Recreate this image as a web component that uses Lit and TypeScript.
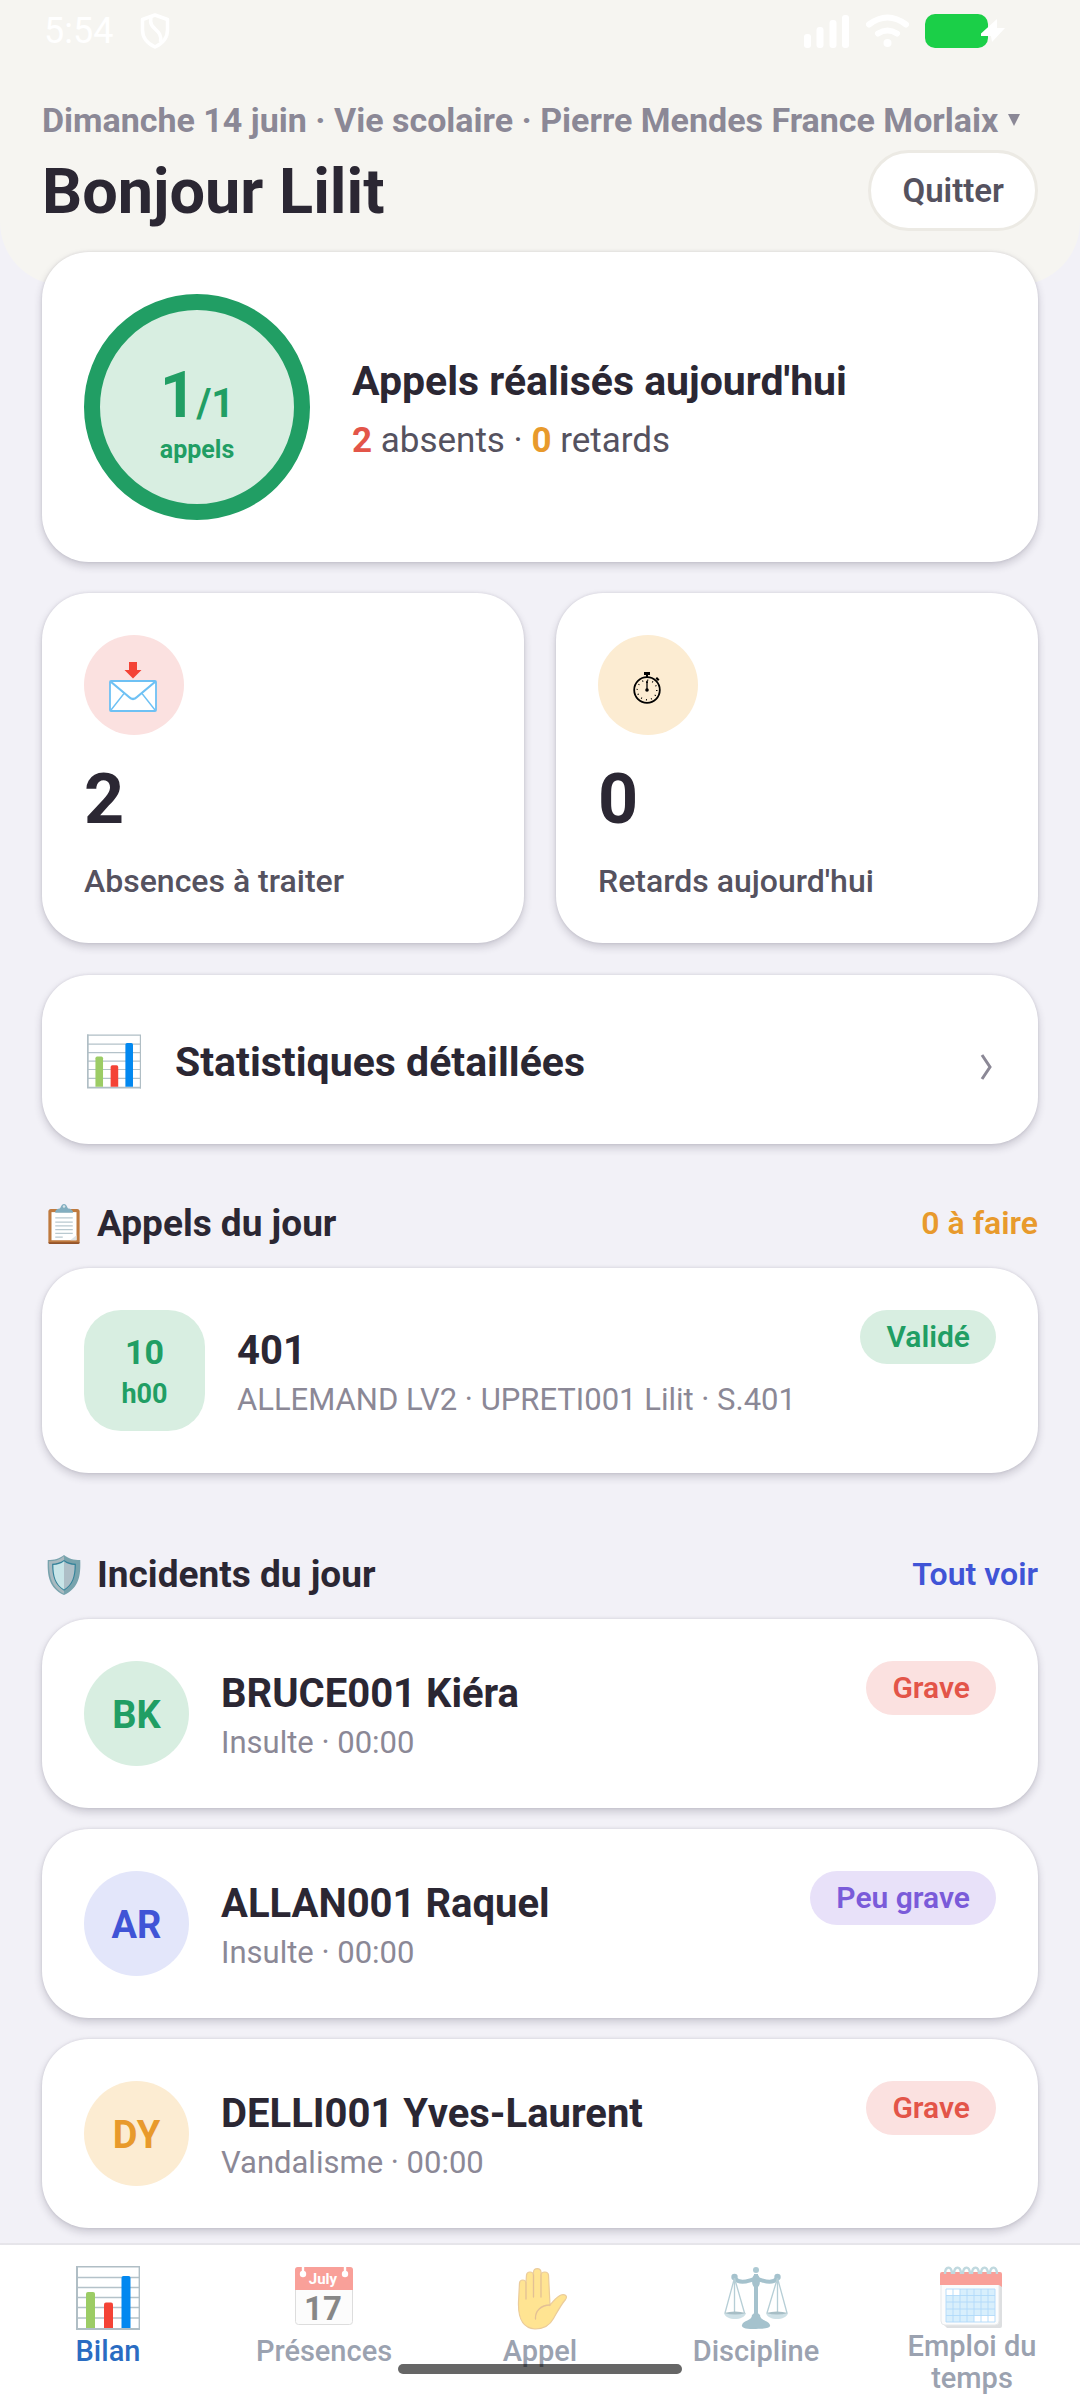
import { LitElement, html, svg, css, nothing } from 'lit';
import { customElement, property, state } from 'lit/decorators.js';
import { classMap } from 'lit/directives/class-map.js';

type Tone = 'green' | 'red' | 'orange' | 'blue' | 'violet';

interface Incident {
    initials: string;
    name: string;
    detail: string;
    level: string;
    avatarTone: Tone;
    levelTone: Tone;
}

const INCIDENTS: Incident[] = [
    { initials: 'BK', name: 'BRUCE001 Kiéra', detail: 'Insulte · 00:00', level: 'Grave', avatarTone: 'green', levelTone: 'red' },
    { initials: 'AR', name: 'ALLAN001 Raquel', detail: 'Insulte · 00:00', level: 'Peu grave', avatarTone: 'blue', levelTone: 'violet' },
    { initials: 'DY', name: 'DELLI001 Yves-Laurent', detail: 'Vandalisme · 00:00', level: 'Grave', avatarTone: 'orange', levelTone: 'red' },
];

const TABS = [
    { id: 'bilan', label: 'Bilan', icon: 'chart' },
    { id: 'presences', label: 'Présences', icon: 'calendar' },
    { id: 'appel', label: 'Appel', icon: 'hand' },
    { id: 'discipline', label: 'Discipline', icon: 'scales' },
    { id: 'emploi', label: 'Emploi du temps', icon: 'planner' },
];

// Every pictogram is drawn on a 64x64 grid
const ICONS = {
    chart: svg`
        <rect x="1" y="1" width="62" height="62" fill="#fff"/>
        <path d="M1 11.500H63M1 21.500H63M1 31.500H63M1 41.500H63M1 52H63" stroke="#b4c2c9" stroke-width="1.400"/>
        <path d="M0 .7H64M63.300 0V64" stroke="#b0bec5" stroke-width="1.400"/>
        <path d="M1 0V64M0 63H64" stroke="#b0bec5" stroke-width="2"/>
        <path d="M10 62V28q0-2 2-2h5q2 0 2 2v34z" fill="#9ccc65"/>
        <path d="M28 62V38.500q0-2 2-2h5q2 0 2 2V62z" fill="#f44336"/>
        <path d="M45.500 62V12q0-2 2-2h5q2 0 2 2v50z" fill="#0288f0"/>
    `,
    calendar: svg`
        <rect x="3.500" y="1.500" width="57" height="57" rx="3" fill="#fafafa" stroke="#bdbdbd"/>
        <path d="M3 24V4q0-3 3-3h52q3 0 3 3v20z" fill="#f44336"/>
        <path d="M11 0v7M53 0v7" stroke="#fff" stroke-width="2.400"/>
        <circle cx="11" cy="8" r="3.200" fill="#fff"/>
        <circle cx="53" cy="8" r="3.200" fill="#fff"/>
        <text x="31" y="18" text-anchor="middle" font-size="15" font-weight="700" fill="#fff">July</text>
        <text x="31" y="54" text-anchor="middle" font-size="33" font-weight="700" fill="#111">17</text>
    `,
    hand: svg`
        <path d="M27 63C14 62 10 52 10.500 36L11.500 17c.5-4 6-4 6.500 0L18.500 9c.5-4 6.500-4 7 0V6c.5-4.500 7-4.500 7.500 0v3c.5-4 7-4 7.500 0L42 39c4-4 6-8 11-10 4-1 7 1 4.500 4.500-5 6-8 12-12 19C42 59 36 63 27 63z" fill="#ffca28" stroke="#d99a38" stroke-width="1.200"/>
        <path d="M18 17v16M25.500 9v22M33 9v22M42 39c-9 0-15 6-14.500 14" fill="none" stroke="#c9832e" stroke-width="1.300" stroke-linecap="round"/>
    `,
    scales: svg`
        <path d="M10 12c8 8 16 1 22 1s14 7 22-1" fill="none" stroke="#4d879d" stroke-width="4"/>
        <path d="M32 8v42" stroke="#4d879d" stroke-width="4"/>
        <ellipse cx="32" cy="15" rx="4" ry="7" fill="#4d879d"/>
        <circle cx="32" cy="4" r="3" fill="#5c95a8"/>
        <circle cx="10.500" cy="11" r="3.200" fill="#4d879d"/>
        <circle cx="53.500" cy="11" r="3.200" fill="#4d879d"/>
        <path d="M10.500 12L1 47M10.500 12l10 35M10.500 12v35M53.500 12L43 47M53.500 12L63 47M53.500 12v35" stroke="#6f9fae" stroke-width="1.300"/>
        <path d="M0 47h22c-2 8-20 8-22 0zM42 47h22c-2 8-20 8-22 0z" fill="#9ec3cf"/>
        <path d="M0 47q11-3 22 0-11 3-22 0zM42 47q11-3 22 0-11 3-22 0z" fill="#517f8e"/>
        <path d="M28 49q4-5 8 0c0 6 9 5 10 10 1 3-5 4-14 4s-15-1-14-4c1-5 10-4 10-10z" fill="#4d879d"/>
    `,
    planner: svg`
        <path d="M2 14h59q1 0 1 2v44q0 2-2 2H7l-5-5z" fill="#bdc1c4"/>
        <path d="M1 8h58v47q0 4-4 4H5q-4 0-4-4z" fill="#fafafa" stroke="#cfd3d6"/>
        <path d="M0 19V8q0-2 2-2h58q2 0 2 2v13l-3-2H0z" fill="#f44336"/>
        <path d="M6 23h49v33H6z" fill="#b3e0fb"/>
        <path d="M6 23h14v7H6zM34 49h21v7H34z" fill="#fff"/>
        <path d="M6 23h49M6 29.500h49M6 36h49M6 43h49M6 49.500h49M6 56h49M6 23v33M13 23v33M20 23v33M27 23v33M34 23v33M41 23v33M48 23v33M55 23v33" stroke="#64b5f6" stroke-width=".9"/>
        <path d="M5 8c0-8 7-9 7 0M14 8c0-8 7-9 7 0M23 8c0-8 7-9 7 0M32 8c0-8 7-9 7 0M41 8c0-8 7-9 7 0M50 8c0-8 7-9 7 0" fill="none" stroke="#82b4c0" stroke-width="2.400"/>
    `,
    mail: svg`
        <path d="M27 9h8v8h4.500L31 25.500 22.500 17H27z" fill="#f44336"/>
        <rect x="8" y="28" width="46" height="30" rx="1" fill="#fff" stroke="#6ec1f4" stroke-width="1.800"/>
        <path d="M8.500 28.500L27 44q4 4 8 0l18.500-15.500" fill="none" stroke="#6ec1f4" stroke-width="2.200"/>
        <path d="M9 57l13-16.500M53 57L40 40.500" stroke="#6ec1f4" stroke-width="1.400"/>
    `,
    stopwatch: svg`
        <circle cx="31" cy="37" r="12.800" fill="none" stroke="#000" stroke-width="1.800"/>
        <path d="M28 19h6v3h-6zM30 21h2v3h-2zM41 24l2.500 2.500-1.500 1.500-2.500-2.500z"/>
        <path d="M31 28v9" stroke="#000" stroke-width="1.300"/>
        <path d="M30 30l1-3 1 3z"/>
        <circle cx="31" cy="37" r="1.800"/>
        <circle cx="31" cy="37" r="9.800" fill="none" stroke="#000" stroke-width="1.400" stroke-dasharray="1 4.130"/>
    `,
    clipboard: svg`
        <rect x="7" y="8" width="50" height="56" rx="4" fill="#bf7a3f"/>
        <path d="M7 61h50v1q0 2-3 2H10q-3 0-3-2z" fill="#93532a"/>
        <rect x="12" y="13" width="40" height="45" fill="#fff"/>
        <path d="M52 50v8H42z" fill="#dfe4e6"/>
        <path d="M18 22h28M18 29h28M18 35h28M18 41h28M18 47h28M18 53h12" stroke="#b9c9d0" stroke-width="2"/>
        <path d="M18 14q-1-6 7-7c2 0 2-7 7-7s5 7 7 7c8 1 8 7 7 7z" fill="#82aec0"/>
        <circle cx="32" cy="4" r="2" fill="#d7e5ea"/>
    `,
    shield: svg`
        <path d="M32 0C25 6 16 8 6 8c-1 25 2 45 26 56C56 53 59 33 58 8 48 8 39 6 32 0z" fill="#78a3ad"/>
        <path d="M32 2C25 8 17 10 8 10c0 23 3 41 24 52z" fill="#a9bac0"/>
        <path d="M32 8c-6 4-13 6-19 6 0 20 4 34 19 43 15-9 19-23 19-43-6 0-13-2-19-6z" fill="#35839a"/>
        <path d="M32 10c-5 4-11 6-17 6 0 19 4 31 17 39z" fill="#c8e5e8"/>
        <path d="M32 10c5 4 11 6 17 6 0 19-4 31-17 39z" fill="#aebfc7"/>
    `,
};

const icon = (name: string) => html`<svg class="icon icon-${name}" viewBox="0 0 64 64" aria-hidden="true">${ICONS[name]}</svg>`;

const shared = css`
    * {
        box-sizing: border-box;
    }

    .card {
        background: #fff;
        border-radius: 47px;
        padding: 42px;
        box-shadow: 0 4px 8px rgba(40, 35, 60, 0.2), 0 0 3px rgba(40, 35, 60, 0.12);
    }

    .row-card {
        display: flex;
        align-items: center;
    }

    .info {
        flex: 1;
        min-width: 0;
        padding-top: 3px;
        display: flex;
        flex-direction: column;
        gap: 6px;
    }

    .name {
        font-size: 40px;
        line-height: 50px;
        font-weight: 700;
        color: #2b2733;
    }

    .detail {
        font-size: 31px;
        line-height: 36px;
        color: #8b8896;
    }

    .badge {
        align-self: flex-start;
        padding: 10px 26px;
        border-radius: 27px;
        font-size: 30px;
        line-height: 34px;
        font-weight: 600;
    }

    .green { color: #219e64; background: #d8eee1; }
    .red { color: #e35549; background: #fbe1e0; }
    .orange { color: #e89a2c; background: #fcecd2; }
    .blue { color: #4054d6; background: #e3e6fa; }
    .violet { color: #7a5bd9; background: #e8e1f9; }
`;

@customElement('incident-card')
export class IncidentCard extends LitElement {
    @property({ attribute: false }) incident!: Incident;

    static styles = [shared, css`
        :host {
            display: block;
        }

        .row-card {
            gap: 32px;
        }

        .avatar {
            width: 105px;
            height: 105px;
            border-radius: 50%;
            padding-top: 2px;
            display: flex;
            align-items: center;
            justify-content: center;
            font-size: 38px;
            font-weight: 700;
        }
    `];

    render() {
        const { initials, name, detail, level, avatarTone, levelTone } = this.incident;
        return html`
            <article class="card row-card">
                <div class="avatar ${avatarTone}">${initials}</div>
                <div class="info">
                    <div class="name">${name}</div>
                    <div class="detail">${detail}</div>
                </div>
                <div class="badge ${levelTone}">${level}</div>
            </article>
        `;
    }
}

@customElement('app-root')
export class AppRoot extends LitElement {
    @state() private tab = 'bilan';

    static styles = [shared, css`
        :host {
            display: flex;
            flex-direction: column;
            min-height: 100vh;
            background: #f2f1f7;
            color: #2b2733;
            font-family: Roboto, 'Noto Sans', sans-serif;
        }

        button {
            font: inherit;
            color: inherit;
            background: none;
            border: none;
            padding: 0;
            cursor: pointer;
        }

        h1, h2, p {
            margin: 0;
        }

        .icon {
            display: block;
            flex: none;
            width: 64px;
            height: 64px;
        }

        .top {
            background: #f6f5f1;
            border-radius: 0 0 63px 63px;
            padding: 0 42px 54px;
        }

        .status {
            display: flex;
            align-items: center;
            height: 101px;
            padding: 0 33px 39px 2px;
            color: #fff;
            font-size: 36px;
        }

        .status-left {
            flex: 1;
            display: flex;
            align-items: center;
            gap: 27px;
        }

        .status-right {
            display: flex;
            align-items: center;
            gap: 16px;
        }

        .status svg {
            display: block;
        }

        .school {
            display: flex;
            align-items: center;
            gap: 10px;
            width: 100%;
            font-size: 34px;
            line-height: 38px;
            font-weight: 700;
            color: #8b8896;
            white-space: nowrap;
        }

        .welcome {
            display: flex;
            align-items: center;
            justify-content: space-between;
            margin-top: 11px;
        }

        .welcome h1 {
            padding-top: 2px;
            font-size: 63px;
            line-height: 72px;
            font-weight: 700;
        }

        .welcome .quit {
            height: 81px;
            padding: 0 31px;
            background: #fff;
            border: 3px solid #eceae4;
            border-radius: 41px;
            font-size: 33px;
            font-weight: 600;
            color: #55525f;
        }

        main {
            flex: 1;
            position: relative;
            margin-top: -33px;
            padding: 0 42px;
            display: flex;
            flex-direction: column;
        }

        .summary {
            display: flex;
            align-items: center;
            gap: 42px;
        }

        .ring {
            width: 226px;
            height: 226px;
            flex: none;
            border: 16px solid #219e64;
            border-radius: 50%;
            padding-top: 13px;
            display: flex;
            flex-direction: column;
            align-items: center;
            justify-content: center;
            font-weight: 700;
        }

        .ring-count {
            font-size: 64px;
            line-height: 64px;
        }

        .ring-total {
            font-size: 40px;
        }

        .ring-label {
            font-size: 25px;
            line-height: 28px;
        }

        .summary-text {
            padding-top: 4px;
            display: flex;
            flex-direction: column;
            gap: 16px;
        }

        .summary-text h2 {
            font-size: 41px;
            line-height: 48px;
        }

        .summary-text p {
            font-size: 35px;
            line-height: 40px;
            color: #55525f;
        }

        .summary-text b {
            background: none;
        }

        .tiles {
            display: grid;
            grid-template-columns: 1fr 1fr;
            gap: 32px;
            margin: 31px 0 32px;
        }

        .tile-icon {
            width: 100px;
            height: 100px;
            border-radius: 50%;
            display: flex;
            align-items: center;
            justify-content: center;
        }

        .tile-value {
            margin-top: 23px;
            font-size: 70px;
            line-height: 82px;
            font-weight: 700;
        }

        .tile-label {
            margin-top: 21px;
            font-size: 32px;
            line-height: 40px;
            font-weight: 500;
            color: #55525f;
        }

        .card.stats-link {
            display: flex;
            align-items: center;
            gap: 31px;
            width: 100%;
            padding: 54px 42px 50px;
            text-align: left;
            font-size: 41px;
            font-weight: 700;
            background: #fff;
        }

        .stats-link .icon {
            width: 60px;
            height: 65px;
            padding: 0 3px;
        }

        .stats-link span {
            flex: 1;
        }

        .section-head {
            display: flex;
            align-items: center;
            justify-content: space-between;
            margin: 57px 0 23px;
        }

        .section-head h2 {
            display: flex;
            align-items: center;
            gap: 11px;
            padding-top: 2px;
            font-size: 37px;
            line-height: 42px;
        }

        .section-head .icon {
            width: 44px;
            height: 40px;
        }

        .section-note,
        .section-link {
            font-size: 32px;
            line-height: 44px;
            font-weight: 600;
        }

        .section-note {
            color: #e89a2c;
        }

        .section-link {
            color: #4054d6;
            text-decoration: none;
        }

        .call {
            gap: 32px;
            margin-bottom: 22px;
        }

        .slot {
            width: 121px;
            height: 121px;
            border-radius: 37px;
            padding-top: 4px;
            display: flex;
            flex-direction: column;
            align-items: center;
            justify-content: center;
            font-size: 34px;
            line-height: 42px;
            font-weight: 700;
        }

        .slot small {
            font-size: 27px;
            line-height: 42px;
        }

        .incidents {
            display: flex;
            flex-direction: column;
            gap: 21px;
        }

        .tabs {
            position: sticky;
            bottom: 0;
            display: flex;
            align-items: flex-start;
            padding: 21px 0 6px;
            background: #fff;
            border-top: 2px solid #e6e5ea;
        }

        .tab {
            flex: 1 1 0;
            min-width: 0;
            display: flex;
            flex-direction: column;
            align-items: center;
            color: #9ba2b0;
        }

        .tab .icon {
            opacity: 0.5;
        }

        .tab.active {
            color: #2a6cc2;
        }

        .tab.active .icon {
            opacity: 1;
        }

        .tab-label {
            display: flex;
            align-items: center;
            min-height: 42px;
            padding: 0 40px;
            font-size: 29px;
            line-height: 32px;
            font-weight: 500;
        }

        .home-indicator {
            position: absolute;
            left: 50%;
            bottom: 26px;
            width: 284px;
            height: 10px;
            margin-left: -142px;
            border-radius: 5px;
            background: rgba(0, 0, 0, 0.6);
        }
    `];

    render() {
        return html`
            <header class="top">
                ${this.renderStatus()}
                <button class="school">
                    Dimanche 14 juin · Vie scolaire · Pierre Mendes France Morlaix
                    <svg width="12" height="12" viewBox="0 0 12 12" aria-hidden="true"><path d="M0 0H12L6 12z" fill="currentColor"/></svg>
                </button>
                <div class="welcome">
                    <h1>Bonjour Lilit</h1>
                    <button class="quit">Quitter</button>
                </div>
            </header>
            <main>
                <section class="card summary">
                    <div class="ring green">
                        <div class="ring-count">1<span class="ring-total">/1</span></div>
                        <div class="ring-label">appels</div>
                    </div>
                    <div class="summary-text">
                        <h2>Appels réalisés aujourd'hui</h2>
                        <p><b class="red">2</b> absents · <b class="orange">0</b> retards</p>
                    </div>
                </section>

                <div class="tiles">
                    ${this.renderTile('mail', 'red', 2, 'Absences à traiter')}
                    ${this.renderTile('stopwatch', 'orange', 0, "Retards aujourd'hui")}
                </div>

                <button class="card stats-link">
                    ${icon('chart')}
                    <span>Statistiques détaillées</span>
                    <svg width="18" height="38" viewBox="0 0 18 38" aria-hidden="true"><path d="M4 12L12 24 4 36" fill="none" stroke="#8b8896" stroke-width="3"/></svg>
                </button>

                <section>
                    <div class="section-head">
                        <h2>${icon('clipboard')}Appels du jour</h2>
                        <span class="section-note">0 à faire</span>
                    </div>
                    <article class="card row-card call">
                        <div class="slot green">10<small>h00</small></div>
                        <div class="info">
                            <div class="name">401</div>
                            <div class="detail">ALLEMAND LV2 · UPRETI001 Lilit · S.401</div>
                        </div>
                        <div class="badge green">Validé</div>
                    </article>
                </section>

                <section>
                    <div class="section-head">
                        <h2>${icon('shield')}Incidents du jour</h2>
                        <a class="section-link" href="#incidents">Tout voir</a>
                    </div>
                    <div class="incidents">
                        ${INCIDENTS.map((i) => html`<incident-card .incident=${i}></incident-card>`)}
                    </div>
                </section>
            </main>
            <nav class="tabs">
                ${TABS.map((t) => html`
                    <button
                        class=${classMap({ tab: true, active: t.id === this.tab })}
                        aria-current=${t.id === this.tab ? 'page' : nothing}
                        @click=${() => { this.tab = t.id; }}
                    >
                        ${icon(t.icon)}
                        <span class="tab-label">${t.label}</span>
                    </button>
                `)}
                <div class="home-indicator"></div>
            </nav>
        `;
    }

    renderTile(name: string, tone: Tone, value: number, label: string) {
        return html`
            <section class="card">
                <div class="tile-icon ${tone}">${icon(name)}</div>
                <div class="tile-value">${value}</div>
                <div class="tile-label">${label}</div>
            </section>
        `;
    }

    renderStatus() {
        return html`
            <div class="status">
                <div class="status-left">
                    <span>5:54</span>
                    <svg width="30" height="36" viewBox="0 0 30 36" fill="none" stroke="#fff" stroke-width="3.500" stroke-linejoin="round">
                        <path d="M15 2L27.500 6.500V17c0 8-5 13.500-12.500 17C7.500 30.500 2.500 25 2.500 17V6.500z"/>
                        <path d="M11 4c-3 14 12 11 9.500 25"/>
                    </svg>
                </div>
                <div class="status-right">
                    <svg width="46" height="34" viewBox="0 0 46 34" fill="#fff">
                        <rect x="0" y="20" width="7" height="14" rx="3"/>
                        <rect x="12.500" y="13" width="7" height="21" rx="3"/>
                        <rect x="25.500" y="6" width="7" height="28" rx="3"/>
                        <rect x="38" y="1" width="7" height="33" rx="3"/>
                    </svg>
                    <svg width="43" height="34" viewBox="0 0 43 34" fill="none" stroke="#fff" stroke-width="6" stroke-linecap="round">
                        <path d="M3 10.500Q21.500-3.500 40 10.500M12 19.500q9.500-6 19 0"/>
                        <circle cx="21.500" cy="29" r="4" fill="#fff" stroke="none"/>
                    </svg>
                    <svg width="80" height="34" viewBox="0 0 80 34">
                        <rect width="63" height="34" rx="10" fill="#1bcf48"/>
                        <path d="M72 5L56 19.500V22h10l1 6 13-14H72z" fill="#fff"/>
                    </svg>
                </div>
            </div>
        `;
    }
}
